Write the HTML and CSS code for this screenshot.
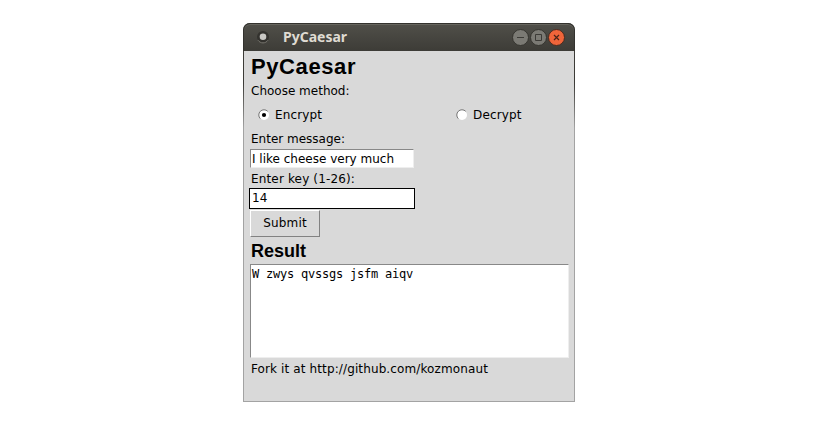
FILE: index.html
```html
<!DOCTYPE html>
<html lang="en">
<head>
<meta charset="utf-8">
<title>PyCaesar</title>
<link rel="stylesheet" href="styles.css">
</head>
<body>
<main class="window">
  <header class="titlebar">
    <svg class="app-icon" width="14" height="14" viewBox="0 0 14 14">
      <circle cx="7" cy="7" r="6" fill="#33322e"/>
      <path d="M2 10.2a6 6 0 0 0 10 0" fill="none" stroke="#77756e"/>
      <circle cx="7" cy="6.8" r="3.3" fill="#c9c8c4"/>
    </svg>
    <span class="title">PyCaesar</span>
    <div class="controls">
      <svg width="17" height="17" viewBox="0 0 17 17"><circle cx="8.5" cy="8.5" r="8" fill="#7b7a74" stroke="#35342f"/><path d="M5 8.5h7" stroke="#3c3b37"/></svg>
      <svg width="17" height="17" viewBox="0 0 17 17"><circle cx="8.5" cy="8.5" r="8" fill="#7b7a74" stroke="#35342f"/><path d="M5.5 5.5h6v6h-6z" fill="none" stroke="#3c3b37"/></svg>
      <svg width="17" height="17" viewBox="0 0 17 17"><circle cx="8.5" cy="8.5" r="8" fill="#f0653a" stroke="#4a2c20"/><path d="M6 6l5 5m0-5l-5 5" stroke="#4a2418" stroke-width="1.2"/></svg>
    </div>
  </header>
  <form class="content">
    <h1>PyCaesar</h1>
    <p class="label method">Choose method:</p>
    <div class="options">
      <label class="option"><svg width="12" height="12" viewBox="0 0 12 12"><circle cx="6" cy="6" r="5" fill="#fff"/><path d="M2.3 9.7A5.2 5.2 0 0 1 9.7 2.3" fill="none" stroke="#777"/><circle cx="6" cy="6" r="2.1"/></svg><span>Encrypt</span></label>
      <label class="option"><svg width="12" height="12" viewBox="0 0 12 12"><circle cx="6" cy="6" r="5" fill="#fff"/><path d="M2.3 9.7A5.2 5.2 0 0 1 9.7 2.3" fill="none" stroke="#777"/></svg><span>Decrypt</span></label>
    </div>
    <p class="label message">Enter message:</p>
    <div class="entry">I like cheese very much</div>
    <p class="label key">Enter key (1-26):</p>
    <div class="entry focused">14</div>
    <button class="submit" type="button">Submit</button>
    <h2>Result</h2>
    <div class="result">W zwys qvssgs jsfm aiqv</div>
    <p class="label footer">Fork it at http://github.com/kozmonaut</p>
  </form>
</main>
</body>
</html>
```
FILE: styles.css
```css
* { box-sizing: border-box; }
body {
  margin: 0;
  background: #fff;
  color: #000;
  font: 12px/20px "DejaVu Sans", sans-serif;
}
h1, h2, p { margin: 0; }
svg { display: block; flex: none; }
.window {
  width: 332px;
  height: 379px;
  margin: 23px 0 0 243px;
  display: flex;
  flex-direction: column;
  border-radius: 7px 7px 0 0;
  background: linear-gradient(#3c3b37 0 60px, #a3a3a3 105px);
}
.titlebar {
  height: 28px;
  flex: none;
  display: flex;
  align-items: center;
  padding: 0 9px 1px 12px;
  border: 1px solid #33322e;
  border-bottom: 0;
  border-radius: 7px 7px 0 0;
  background: linear-gradient(#504f49, #3d3c37);
  box-shadow: inset 0 1px #66655e;
}
.title {
  margin-left: 13px;
  color: #dfdbd2;
  font: bold 14px/26px "Noto Sans", sans-serif;
}
.controls { display: flex; gap: 1px; margin-left: auto; }
.content {
  flex: 1;
  margin: 0 1px 1px;
  padding: 0 5px 0 6px;
  background: #d9d9d9;
}
h1, h2 {
  padding-left: 1px;
  font-family: "Liberation Sans", Arial, sans-serif;
  font-weight: bold;
}
h1 { height: 29px; font-size: 22px; line-height: 31px; letter-spacing: .6px; }
h2 { height: 27px; font-size: 18px; line-height: 29px; }
.label { height: 20px; padding-left: 1px; line-height: 22px; white-space: nowrap; }
.options {
  display: grid;
  grid-template-columns: 198px 1fr;
  height: 28px;
  padding: 1px 0 0 8px;
}
.option { display: flex; align-items: center; gap: 5px; }
.option span { padding-top: 1px; letter-spacing: .15px; }
.message { height: 21px; line-height: 23px; }
.key { letter-spacing: .15px; }
.footer { letter-spacing: .12px; }
.entry {
  width: 164px;
  height: 19px;
  padding-left: 1px;
  border: 1px solid;
  border-color: #888 #eee #eee #888;
  background: #fff;
  line-height: 18px;
}
.focused {
  width: 166px;
  height: 21px;
  margin-left: -1px;
  padding-left: 2px;
  border: 1px solid #000;
  line-height: 19px;
}
.submit {
  display: block;
  width: 70px;
  height: 27px;
  margin-top: 1px;
  padding: 0;
  border: 1px solid;
  border-color: #fff #828282 #828282 #fff;
  background: #d9d9d9;
  color: #000;
  font: 12px/25px "DejaVu Sans", sans-serif;
  letter-spacing: .15px;
}
.result {
  height: 94px;
  padding-left: 1px;
  border: 1px solid;
  border-color: #888 #eee #eee #888;
  background: #fff;
  font: 12px/18px "DejaVu Sans Mono", monospace;
  letter-spacing: -.22px;
}
```
